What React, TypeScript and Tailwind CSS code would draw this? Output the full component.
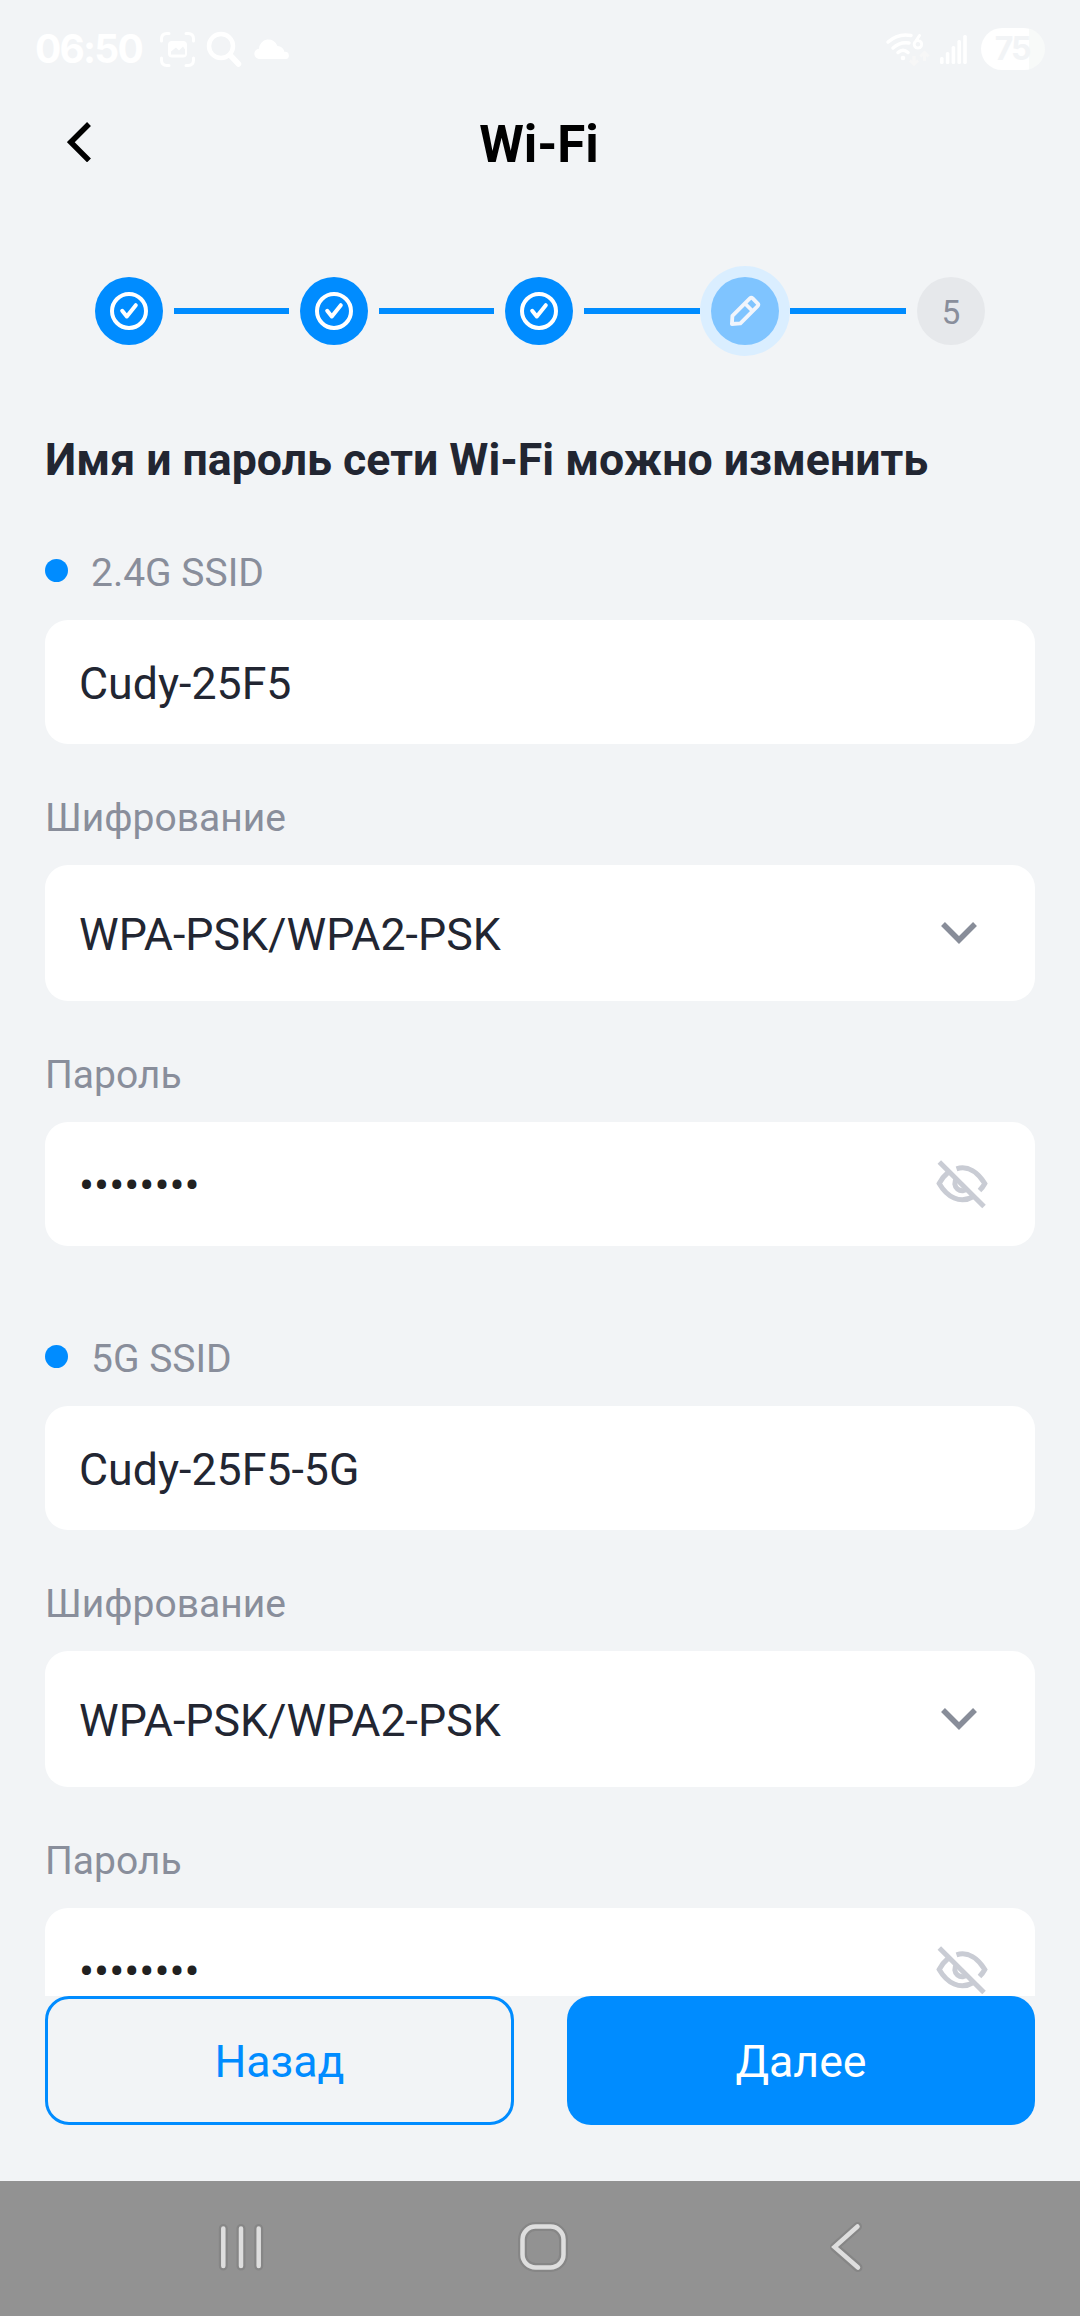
import React from "react";

function StatusBar() {
  return (
    <div className="flex h-[98px] shrink-0 items-center justify-between pl-[35px] pr-[35px] text-white">
      <div className="flex items-center">
        <span className="w-[109px] whitespace-nowrap font-[Inter,sans-serif] text-[39px] leading-[48px] font-bold tracking-[-1.8px]">
          06:50
        </span>
        <svg className="ml-[16px] h-[35px] w-[35px]" viewBox="0 0 35 35" fill="none">
          <path
            d="M1.5 9V7q0-5.500 5.500-5.500H9M26 1.500h2q5.500 0 5.500 5.500v2M33.500 26v2q0 5.500-5.500 5.500h-2M9 33.500H7q-5.500 0-5.500-5.500v-2"
            stroke="#fff"
            strokeWidth="3"
            strokeLinecap="round"
          />
          <rect x="8" y="9" width="19" height="16.500" rx="4" fill="#fff" />
          <path d="M11 22.500v-3l5-4 3 3 4-4 2 3v5z" fill="#f2f4f6" />
        </svg>
        <svg className="ml-[11px] h-[37px] w-[37px]" viewBox="0 0 37 37" fill="none">
          <circle cx="15" cy="15" r="12" stroke="#fff" strokeWidth="4.500" />
          <path d="M24 24l8.500 9" stroke="#fff" strokeWidth="5.500" strokeLinecap="round" />
        </svg>
        <svg className="ml-[11px] h-[20px] w-[36px]" viewBox="0 0 36 20">
          <path
            d="M6 20a5 5 0 0 1-1-10.300A9.500 9.500 0 0 1 23.500 7a7 7 0 0 1 7 6A3.500 3.500 0 0 1 32 20z"
            fill="#fff"
          />
        </svg>
      </div>
      <div className="flex items-center">
        <svg className="h-[36px] w-[46px]" viewBox="0 0 46 36" fill="none">
          <g stroke="#fff" strokeWidth="3.500" strokeLinecap="round">
            <path d="M3 11Q13 2 26 4.500" />
            <path d="M8 17Q15 10.500 24 12" />
            <path d="M13 21.500Q18 17 23 21.500" />
          </g>
          <circle cx="18" cy="27" r="2.300" fill="#fff" />
          <path
            d="M34.500 4.500l-4 6M33 9.500a3.800 3.800 0 1 1-.1 0"
            stroke="#fff"
            strokeWidth="3"
            strokeLinecap="round"
          />
          <path
            d="M29 25v8m-4-3.500l4 4 4-4M39.500 30v-8m-4 3.500l4-4 4 4"
            stroke="#f7f7f7"
            strokeWidth="3"
          />
        </svg>
        <svg className="ml-[9px] h-[29px] w-[27px]" viewBox="0 0 27 29">
          <g fill="#fff">
            <rect x="0" y="22" width="3.600" height="7" rx="1.500" />
            <rect x="5.800" y="17" width="3.600" height="12" rx="1.500" />
            <rect x="11.600" y="11" width="3.600" height="18" rx="1.500" />
            <rect x="17.400" y="5" width="3.600" height="24" rx="1.500" />
            <rect x="23.200" y="0" width="3.600" height="29" rx="1.500" />
          </g>
        </svg>
        <div className="ml-[14px] flex h-[42px] w-[64px] items-center justify-center rounded-full bg-[linear-gradient(90deg,#fff_75%,#f8faf9_75%)] pr-[2px] font-[Inter,sans-serif] text-[32px] font-bold tracking-[-2px] text-[#f2f4f6]">
          75
        </div>
      </div>
    </div>
  );
}

function Header() {
  return (
    <header className="grid h-[92px] shrink-0 grid-cols-[1fr_auto_1fr] items-center px-[67px]">
      <svg className="-mt-[4px] h-[40px] w-[24px]" viewBox="0 0 24 40" fill="none">
        <path d="M22 2L3.800 20.200 22 38.400" stroke="#000" strokeWidth="5.500" />
      </svg>
      <h1 className="relative top-[1px] -ml-[2px] text-[51px] leading-[60px] font-bold text-black">Wi-Fi</h1>
      <span />
    </header>
  );
}

function DoneStep() {
  return (
    <div className="flex h-[68px] w-[68px] shrink-0 items-center justify-center rounded-full bg-[#008cff]">
      <svg className="h-[38px] w-[38px]" viewBox="-19 -19 38 38" fill="none" stroke="#fff" strokeLinecap="round" strokeLinejoin="round">
        <circle r="17" strokeWidth="4" />
        <path d="M-6.800-.2L-2.200 5.500 6.800-5.800" strokeWidth="4" />
      </svg>
    </div>
  );
}

function Line({ wide }: { wide?: boolean }) {
  return <div className={wide ? "h-[6px] w-[116px] bg-[#008cff]" : "mx-[11px] h-[6px] w-[115px] bg-[#008cff]"} />;
}

function Stepper() {
  return (
    <div className="mt-[76px] flex h-[90px] shrink-0 items-center pl-[95px]">
      <DoneStep />
      <Line />
      <DoneStep />
      <Line />
      <DoneStep />
      <div className="ml-[11px]">
        <Line wide />
      </div>
      <div className="flex h-[90px] w-[90px] shrink-0 items-center justify-center rounded-full bg-[#daeeff]">
        <div className="flex h-[68px] w-[68px] items-center justify-center rounded-full bg-[#7fc4ff]">
          <svg
            className="h-[40px] w-[40px]"
            viewBox="-20 -20 40 40"
            fill="none"
            stroke="#f1f5fc"
            strokeWidth="3.800"
            strokeLinejoin="round"
          >
            <path d="M-13.100 13L-12.600 4.800 4.900-12.600Q6.300-14 7.700-12.600L12.600-7.700Q14-6.300 12.600-4.900L-4.600 12.400z" />
            <path d="M0-7.500L7.500 0" />
          </svg>
        </div>
      </div>
      <Line wide />
      <div className="ml-[11px] flex h-[68px] w-[68px] items-center justify-center rounded-full bg-[#e6e8eb] pt-[4px] text-[33.500px] leading-[40px] text-[#898e9b]">
        5
      </div>
    </div>
  );
}

function Label({ text, dot }: { text: string; dot?: boolean }) {
  return (
    <div className="mb-[24px] flex h-[46px] items-center text-[39px] leading-[46px] text-[#898e9b]">
      {dot && <span className="mr-[23px] -mt-[5px] h-[23px] w-[23px] rounded-full bg-[#008cff]" />}
      <span>{text}</span>
    </div>
  );
}

function EyeOff() {
  return (
    <svg className="h-[50px] w-[52px]" viewBox="0 0 52 50" fill="none" stroke="#c9ccd4" strokeWidth="5">
      <path d="M3.300 3L48 47.500" />
      <path d="M20.500 9.800C32 6 42 13.500 48.800 24.500Q47 28 43.500 31.500" />
      <path d="M12.500 13Q6.500 18 3.200 24.500C11 38 24 45.500 37.500 37.500" />
      <path d="M20.500 19.500A7.200 7.200 0 1 0 32 29" />
    </svg>
  );
}

function NetworkSection({ ssidLabel, ssid }: { ssidLabel: string; ssid: string }) {
  return (
    <section className="flex flex-col">
      <Label dot text={ssidLabel} />
      <div className="mb-[51px] flex h-[124px] items-center rounded-[23px] bg-white pt-[4px] pl-[34px] text-[44.700px] leading-[54px] text-[#222632]">
        {ssid}
      </div>
      <Label text="Шифрование" />
      <div className="mb-[51px] flex h-[136px] items-center justify-between rounded-[23px] bg-white pr-[58px] pl-[34px] text-[44.700px] leading-[54px] text-[#222632]">
        <span className="pt-[4px]">WPA-PSK/WPA2-PSK</span>
        <svg className="-mt-px h-[22px] w-[36px]" viewBox="0 0 36 22" fill="none">
          <path d="M2 2L18 18 34 2" stroke="#888d99" strokeWidth="5.500" />
        </svg>
      </div>
      <Label text="Пароль" />
      <div className="flex h-[124px] items-center justify-between rounded-[23px] bg-white pr-[47px] pl-[34px] text-[44.700px] leading-[30px] text-[#212121]">
        <span className="block h-[30px] translate-y-[2px]">••••••••</span>
        <EyeOff />
      </div>
    </section>
  );
}

function NavBar() {
  return (
    <nav className="grid h-[135px] shrink-0 grid-cols-[482px_122px_476px] items-center bg-[#929292]">
      <svg className="-mt-[3px] ml-[213px] h-[56px] w-[56px]" viewBox="0 0 56 56" fill="none" strokeLinecap="round">
        <path d="M10.300 9.500v37.500M28 9.500v37.500M45.700 9.500v37.500" stroke="#868686" strokeWidth="9" />
        <path d="M10.300 9.500v37.500M28 9.500v37.500M45.700 9.500v37.500" stroke="#dedede" strokeWidth="4.500" />
      </svg>
      <svg className="-mt-[3px] h-[56px] w-[56px] justify-self-center" viewBox="0 0 56 56" fill="none">
        <rect x="7.500" y="7.500" width="41" height="41" rx="13" stroke="#868686" strokeWidth="9" />
        <rect x="7.500" y="7.500" width="41" height="41" rx="13" stroke="#dedede" strokeWidth="4.500" />
      </svg>
      <svg className="-mt-[3px] ml-[223px] h-[56px] w-[40px]" viewBox="0 0 40 56" fill="none" strokeLinecap="round">
        <path d="M30.500 7.500L7.500 28 31 48.500" stroke="#868686" strokeWidth="9" strokeLinejoin="round" />
        <path d="M30.500 7.500L7.500 28 31 48.500" stroke="#dedede" strokeWidth="4.500" />
      </svg>
    </nav>
  );
}

export default function App() {
  return (
    <div className="flex h-[2316px] w-[1080px] flex-col overflow-hidden bg-[#f2f4f6] font-[Roboto,sans-serif]">
      <StatusBar />
      <Header />
      <Stepper />
      <main className="flex min-h-0 flex-1 flex-col gap-[90px] overflow-hidden px-[45px]">
        <div className="flex flex-col">
          <h2 className="mt-[74px] mb-[60px] text-[44.650px] leading-[60px] font-bold whitespace-nowrap text-[#222632]">
            Имя и пароль сети Wi-Fi можно изменить
          </h2>
          <NetworkSection ssidLabel="2.4G SSID" ssid="Cudy-25F5" />
        </div>
        <NetworkSection ssidLabel="5G SSID" ssid="Cudy-25F5-5G" />
      </main>
      <div className="flex h-[185px] shrink-0 items-start justify-between px-[45px]">
        <button className="h-[129px] w-[469px] rounded-[24px] border-[3px] border-[#008cff] pt-[5px] text-[44.700px] text-[#008cff]">
          Назад
        </button>
        <button className="h-[129px] w-[468px] rounded-[24px] bg-[#008cff] pt-[5px] text-[44.700px] text-white">
          Далее
        </button>
      </div>
      <NavBar />
    </div>
  );
}
